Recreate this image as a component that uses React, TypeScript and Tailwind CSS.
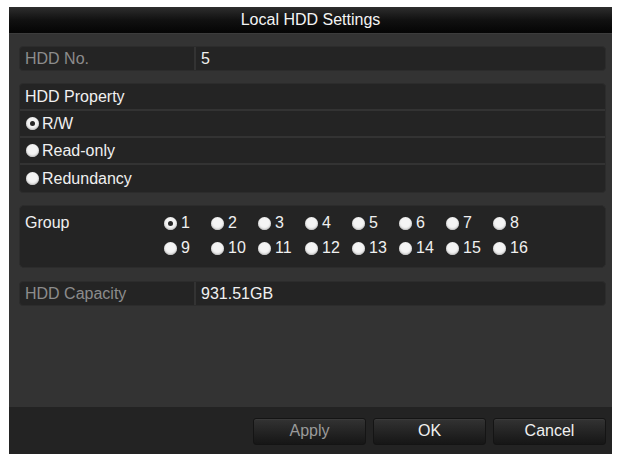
const font = { fontFamily: '"Liberation Sans", Arial, sans-serif' };

function Radio({ checked }: { checked?: boolean }) {
  return (
    <span className="relative inline-flex h-[13px] w-[13px] shrink-0 items-center justify-center rounded-full bg-[#f4f4f4] shadow-[inset_0_-1px_2px_#b8b8b8]">
      {checked && <span className="h-[5px] w-[5px] rounded-full bg-[#262626]" />}
    </span>
  );
}

function InfoRow({ label, value }: { label: string; value: string }) {
  return (
    <div className="flex h-[25px] rounded-[4px] border border-[#2c2c2c] bg-[#242424] text-[16px] leading-none">
      <div className="flex w-[176px] items-center border-r-2 border-[#333] pl-[5px] text-[#8c8c8c]">{label}</div>
      <div className="flex flex-1 items-center pl-[5px] text-[#f0f0f0]">{value}</div>
    </div>
  );
}

function PropRow({ label, checked, last }: { label: string; checked?: boolean; last?: boolean }) {
  return (
    <div className={`flex h-[27px] items-center gap-[2px] pl-[6px] ${last ? "" : "border-b-2 border-[#333]"}`}>
      <Radio checked={checked} />
      <span className="ml-[1px]">{label}</span>
    </div>
  );
}

export default function App() {
  const groups = Array.from({ length: 16 }, (_, i) => i + 1);

  return (
    <div className="h-[465px] w-[617px] bg-white pl-[9px] pt-[7px]" style={font}>
      <div className="flex h-[447px] w-[603px] flex-col bg-[#333333] text-[16px] text-[#f0f0f0]">
        {/* Title */}
        <div className="flex h-[27px] shrink-0 items-center justify-center border-b border-[#3c3c3c] bg-gradient-to-b from-[#2e2e2e] via-[#111] to-[#050505] text-[16px] text-[#f4f4f4]">
          Local HDD Settings
        </div>

        {/* Body */}
        <div className="flex flex-1 flex-col pl-[10px] pr-[6px] pt-[12px]">
          <InfoRow label="HDD No." value="5" />

          <div className="mt-[12px] flex flex-col rounded-[4px] border border-[#2c2c2c] bg-[#242424] leading-none">
            <div className="flex h-[27px] items-center border-b-2 border-[#333] pl-[5px]">HDD Property</div>
            <PropRow label="R/W" checked />
            <PropRow label="Read-only" />
            <PropRow label="Redundancy" last />
          </div>

          <div className="mt-[12px] flex h-[63px] rounded-[5px] border border-[#2c2c2c] bg-[#242424] leading-none">
            <div className="w-[144px] pl-[5px] pt-[9px]">Group</div>
            <div className="grid grid-cols-[repeat(8,47px)] content-start gap-y-[9px] pt-[9px]">
              {groups.map((g) => (
                <div key={g} className="flex h-[16px] items-center gap-[4px]">
                  <Radio checked={g === 1} />
                  <span>{g}</span>
                </div>
              ))}
            </div>
          </div>

          <div className="mt-[13px]">
            <InfoRow label="HDD Capacity" value="931.51GB" />
          </div>
        </div>

        {/* Footer */}
        <div className="flex h-[47px] shrink-0 items-center justify-end gap-[7px] bg-[#232323] pr-[6px] pt-[1px]">
          {["Apply", "OK", "Cancel"].map((b) => (
            <button
              key={b}
              className={`h-[27px] w-[113px] rounded-[3px] border border-[#141414] bg-gradient-to-b from-[#333] to-[#161616] text-[16px] leading-none shadow-[inset_0_1px_0_#3a3a3a] ${
                b === "Apply" ? "text-[#9a9a9a]" : "text-[#f0f0f0]"
              }`}
            >
              {b}
            </button>
          ))}
        </div>
      </div>
    </div>
  );
}
